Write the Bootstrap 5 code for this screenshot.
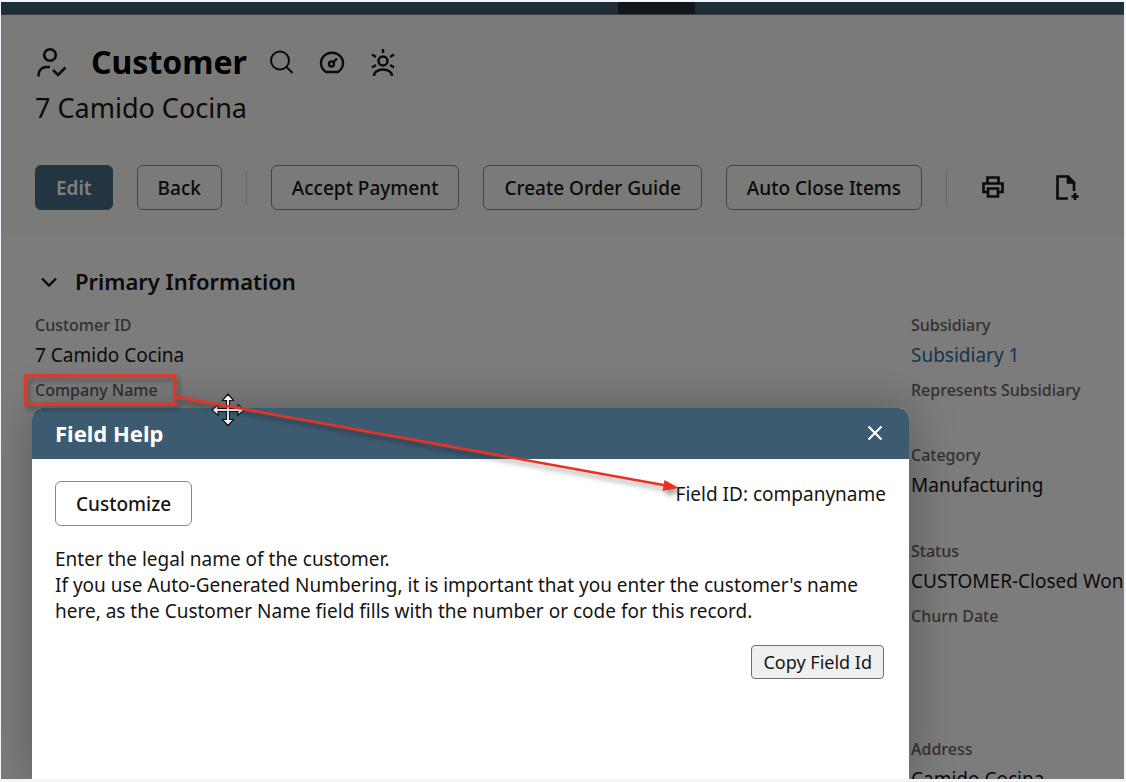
<!DOCTYPE html>
<html lang="en">
<head>
<meta charset="utf-8">
<meta name="viewport" content="width=device-width, initial-scale=1">
<title>Customer - 7 Camido Cocina</title>
<link href="https://cdn.jsdelivr.net/npm/bootstrap@5.3.0/dist/css/bootstrap.min.css" rel="stylesheet">
<style>
  body { font-family: "Noto Sans", "Open Sans", sans-serif; background: #f3f5fa; color: #161513; font-size: 19px; line-height: 26px; }
  .window-frame { padding: 2px 2px 3px 1px; }
  .screen { background: #f9f9f9; }
  .top-strip { height: 13px; background: #3c5c6e; border-bottom: 1px solid #777b82; padding-left: 617px; }
  .top-strip .active-tab { width: 77px; background: #1e2f3b; }
  .record-header { background: #f5f4f1; padding: 23px 34px 26px; }
  .record-title { font-size: 32px; line-height: 48px; font-weight: 700; color: #000; }
  .record-name { font-size: 27px; line-height: 44px; }
  .title-icons { gap: 24px; margin-left: 22px; }
  .tool-row { gap: 24px; margin-top: 35px; }
  .btn-record { height: 45px; padding: 0 20px; font-size: 19px; line-height: 26px; font-weight: 500; color: #161513; border: 1px solid #8a8885; border-radius: 6px; white-space: nowrap; }
  .btn-record.btn-edit { background: #446a80; border-color: #446a80; color: #fff; font-weight: 600; }
  .btn-plain { background: none; border: 0; padding: 0; line-height: 0; color: #161513; }
  .divider { width: 1px; height: 34px; background: #cfcdca; }
  .fields { padding: 29px 0 0 34px; }
  .section-head { font-size: 22px; line-height: 32px; font-weight: 600; gap: 16px; padding-left: 4px; }
  .side-col { width: 213px; flex: none; white-space: nowrap; }
  .fields dl { margin: 0; }
  .field-item { min-height: 65px; }
  .field-item dt { font-size: 16px; line-height: 24px; font-weight: 500; color: #65625f; }
  .field-item dd { margin: 3px 0 8px; line-height: 30px; min-height: 30px; }
  .field-item a { color: #2f6a8c; text-decoration: none; }
  .gap-row { margin-top: 31px; }
  .gap-block { margin-top: 68px; }
  .shade { background: rgba(0, 0, 0, .5); }
  .help-dialog { top: 406px; left: 31px; right: 215px; bottom: 0; background: #fff; border-radius: 10px 10px 0 0; box-shadow: 0 0 48px rgba(0, 0, 0, .28); }
  .help-head { background: #3d5b70; color: #fff; height: 51px; padding: 0 26px 2px 23px; border-radius: 10px 10px 0 0; }
  .help-head h2 { font-size: 22px; line-height: 30px; font-weight: 700; margin: 0; }
  .help-body { padding: 22px 23px 0; }
  .help-text { margin: 20px 0 21px; }
  .btn-copy { height: 34px; padding: 0 11px; margin-right: 2px; font-size: 18px; line-height: 26px; color: #161513; background: #efefef; border: 1px solid #6f6f6f; border-radius: 4px; }
  .notes { pointer-events: none; }
</style>
</head>
<body>
<div class="window-frame vh-100">
<div class="screen position-relative overflow-hidden h-100">
  <div class="top-strip d-flex"><div class="active-tab"></div></div>

  <header class="record-header">
    <div class="d-flex align-items-center">
      <svg width="32" height="32" viewBox="0 0 32 32" fill="none" stroke="#161513" stroke-width="2.600" aria-hidden="true"><circle cx="15" cy="9" r="5.800"/><path d="M3.500 30.500V29c0-5 4-8 8-8h3.500M18 24l5 5 7.500-7.500"/></svg>
      <h1 class="record-title mb-0 ms-4">Customer</h1>
      <div class="title-icons d-flex align-items-center">
        <button class="btn-plain" aria-label="Search"><svg width="26" height="26" viewBox="0 0 26 26" fill="none" stroke="currentColor" stroke-width="2"><circle cx="11" cy="11.500" r="9"/><path d="M17.500 18l6 6"/></svg></button>
        <button class="btn-plain" aria-label="Dashboard"><svg width="26" height="26" viewBox="0 0 26 26" fill="none" stroke="currentColor" stroke-width="2.400"><path d="M7 23a11 10.500 0 1 1 12 0z" stroke-linejoin="round"/><circle cx="12.500" cy="15" r="2.500"/><path d="M14.500 13L18 9.500"/></svg></button>
        <button class="btn-plain" aria-label="Customer 360"><svg width="28" height="30" viewBox="0 0 28 30" fill="none" stroke="currentColor" stroke-width="2.500"><circle cx="14" cy="14" r="4.500"/><path d="M5 29c0-4 4-6.500 9-6.500s9 2.500 9 6.500M14 2v4M3 7.500l4 2.500M25 7.500l-4 2.500M3 20.500l4-2.500M25 20.500l-4-2.500"/></svg></button>
      </div>
    </div>
    <div class="record-name">7 Camido Cocina</div>
    <div class="tool-row d-flex align-items-center">
      <button class="btn btn-record btn-edit">Edit</button>
      <button class="btn btn-record">Back</button>
      <span class="divider"></span>
      <button class="btn btn-record">Accept Payment</button>
      <button class="btn btn-record">Create Order Guide</button>
      <button class="btn btn-record">Auto Close Items</button>
      <span class="divider"></span>
      <button class="btn-plain ms-2" aria-label="Print"><svg width="28" height="28" viewBox="0 0 28 28" fill="none" stroke="currentColor" stroke-width="2.600"><path d="M8.500 9V3.500h11V9M9 18H4.500V9.500h19V18H19"/><path d="M9 14.500h10v8H9z"/></svg></button>
      <button class="btn-plain ms-4" aria-label="New"><svg width="28" height="28" viewBox="0 0 28 28" fill="none" stroke="currentColor" stroke-width="2.600"><path d="M13 24.500H2.500v-22H13l6 6V17"/><path d="M12.500 2.500V9H19z" fill="currentColor" stroke-width="1.500"/><path d="M20 19v7M16.500 22.500h7"/></svg></button>
    </div>
  </header>

  <main class="fields d-flex">
    <section class="flex-grow-1">
      <h2 class="section-head d-flex align-items-center mb-0">
        <svg width="20" height="20" viewBox="0 0 20 20" fill="none" stroke="#161513" stroke-width="2.400" aria-hidden="true"><path d="M3 7.500l7 7 7-7"/></svg>
        Primary Information
      </h2>
      <dl class="mt-3">
        <div class="field-item"><dt>Customer ID</dt><dd>7 Camido Cocina</dd></div>
        <div class="field-item"><dt>Company Name</dt><dd></dd></div>
      </dl>
    </section>
    <section class="side-col pt-5">
      <dl>
        <div class="field-item"><dt>Subsidiary</dt><dd><a href="#">Subsidiary 1</a></dd></div>
        <div class="field-item"><dt>Represents Subsidiary</dt><dd></dd></div>
        <div class="field-item"><dt>Category</dt><dd>Manufacturing</dd></div>
        <div class="field-item gap-row"><dt>Status</dt><dd>CUSTOMER-Closed Won</dd></div>
        <div class="field-item"><dt>Churn Date</dt><dd></dd></div>
        <div class="field-item gap-block"><dt>Address</dt><dd>Camido Cocina</dd></div>
      </dl>
    </section>
  </main>

  <div class="shade position-absolute top-0 start-0 w-100 h-100"></div>

  <div class="help-dialog position-absolute" role="dialog" aria-labelledby="help-title">
    <div class="help-head d-flex align-items-center justify-content-between">
      <h2 id="help-title">Field Help</h2>
      <button class="btn-plain text-white" aria-label="Close"><svg width="16" height="16" viewBox="0 0 16 16" fill="none" stroke="currentColor" stroke-width="2.200"><path d="M1.500 1.500l13 13M14.500 1.500l-13 13"/></svg></button>
    </div>
    <div class="help-body">
      <div class="d-flex justify-content-between align-items-start">
        <button class="btn btn-record">Customize</button>
        <span>Field ID: companyname</span>
      </div>
      <p class="help-text">Enter the legal name of the customer.<br>If you use Auto-Generated Numbering, it is important that you enter the customer's name<br>here, as the Customer Name field fills with the number or code for this record.</p>
      <div class="text-end"><button class="btn btn-copy">Copy Field Id</button></div>
    </div>
  </div>

  <svg class="notes position-absolute top-0 start-0" width="700" height="520" viewBox="1 2 700 520" fill="none" aria-hidden="true">
    <defs><filter id="soft" x="-10%" y="-30%" width="120%" height="160%"><feDropShadow dx="3" dy="4" stdDeviation="2.500" flood-color="#000" flood-opacity=".4"/></filter></defs>
    <path d="M228 394l5.500 6.500h-4v8h8.500v-4l6 5.500-6 5.500v-4h-8.500v8h4l-5.500 6-5.500-6h4v-8H218v4l-6-5.500 6-5.500v4h8.500v-8h-4z" fill="#fff" stroke="#14141e" stroke-width="1.200"/>
    <g filter="url(#soft)">
      <rect x="25.500" y="375.500" width="149.500" height="28.500" stroke="#ea3323" stroke-width="2.600"/>
      <path d="M177 397L666 485.500" stroke="#ea3323" stroke-width="2.600"/>
      <path d="M664.500 480L679 488l-16.500 3z" fill="#ea3323"/>
    </g>
  </svg>
</div>
</div>
<script src="https://cdn.jsdelivr.net/npm/bootstrap@5.3.0/dist/js/bootstrap.bundle.min.js"></script>
</body>
</html>
